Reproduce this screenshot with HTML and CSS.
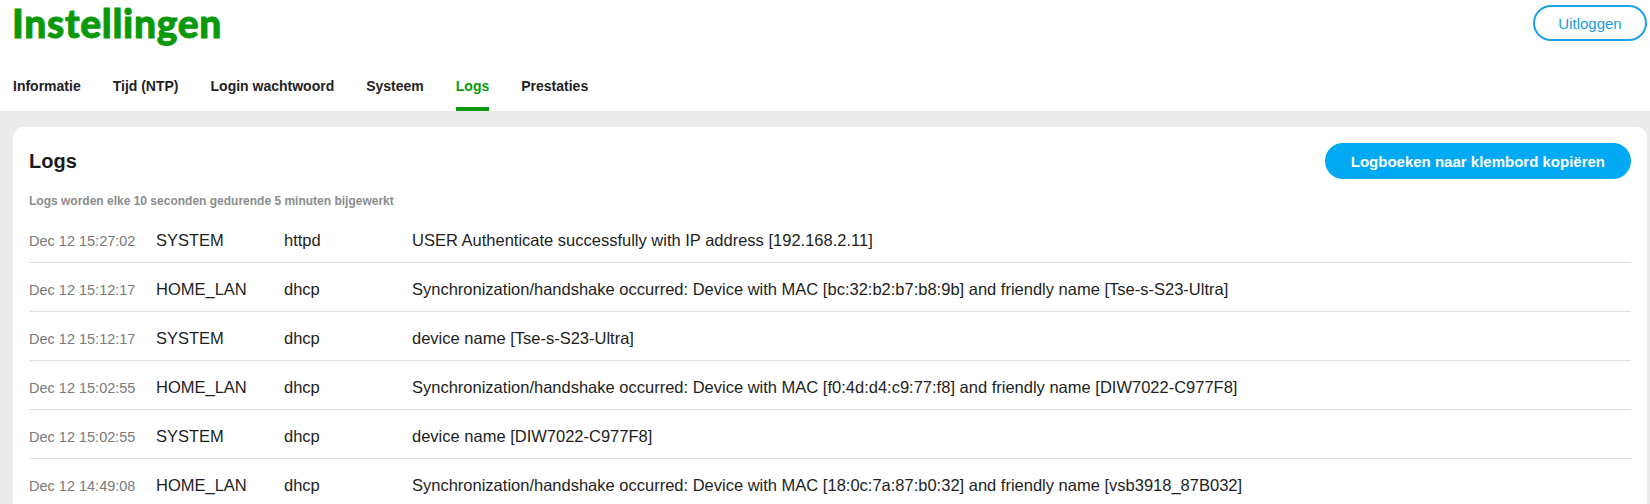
FILE: index.html
```html
<!DOCTYPE html>
<html lang="nl">
<head>
<meta charset="utf-8">
<title>Instellingen</title>
<link rel="stylesheet" href="styles.css">
</head>
<body>
<header class="header">
  <h1 class="title">Instellingen</h1>
  <button class="logout">Uitloggen</button>
</header>
<nav class="tabs">
  <a class="tab">Informatie</a>
  <a class="tab">Tijd (NTP)</a>
  <a class="tab">Login wachtwoord</a>
  <a class="tab">Systeem</a>
  <a class="tab active">Logs</a>
  <a class="tab">Prestaties</a>
</nav>
<main class="main">
  <section class="card">
    <div class="card-head">
      <h2 class="card-title">Logs</h2>
      <button class="copy">Logboeken naar klembord kopiëren</button>
    </div>
    <p class="note">Logs worden elke 10 seconden gedurende 5 minuten bijgewerkt</p>
    <div class="log">
      <div class="row"><span class="date">Dec 12 15:27:02</span><span>SYSTEM</span><span>httpd</span><span>USER Authenticate successfully with IP address [192.168.2.11]</span></div>
      <div class="row"><span class="date">Dec 12 15:12:17</span><span>HOME_LAN</span><span>dhcp</span><span>Synchronization/handshake occurred: Device with MAC [bc:32:b2:b7:b8:9b] and friendly name [Tse-s-S23-Ultra]</span></div>
      <div class="row"><span class="date">Dec 12 15:12:17</span><span>SYSTEM</span><span>dhcp</span><span>device name [Tse-s-S23-Ultra]</span></div>
      <div class="row"><span class="date">Dec 12 15:02:55</span><span>HOME_LAN</span><span>dhcp</span><span>Synchronization/handshake occurred: Device with MAC [f0:4d:d4:c9:77:f8] and friendly name [DIW7022-C977F8]</span></div>
      <div class="row"><span class="date">Dec 12 15:02:55</span><span>SYSTEM</span><span>dhcp</span><span>device name [DIW7022-C977F8]</span></div>
      <div class="row"><span class="date">Dec 12 14:49:08</span><span>HOME_LAN</span><span>dhcp</span><span>Synchronization/handshake occurred: Device with MAC [18:0c:7a:87:b0:32] and friendly name [vsb3918_87B032]</span></div>
    </div>
  </section>
</main>
</body>
</html>
```
FILE: styles.css
```css
html { overflow: hidden; }
body {
  margin: 0;
  background: #fff;
  font-family: "Liberation Sans", Arial, sans-serif;
  color: #1e1e1e;
}
.header {
  display: flex;
  justify-content: space-between;
  align-items: flex-start;
  padding: 0 3px 0 12px;
}
.title {
  margin: 0;
  font-family: "Lato", "Roboto", sans-serif;
  font-weight: 900;
  font-size: 39px;
  line-height: 47px;
  letter-spacing: 0.7px;
  -webkit-text-stroke: 0.9px #0a990a;
  color: #0a990a;
}
.logout {
  margin-top: 5px;
  height: 36px;
  width: 114px;
  border: 2px solid #1ea1e8;
  border-radius: 18px;
  background: #fff;
  color: #1a9be0;
  font-family: "Liberation Sans", Arial, sans-serif;
  font-size: 15px;
  padding: 0;
}
.tabs {
  display: flex;
  gap: 32px;
  padding: 30px 0 0 13px;
}
.tab {
  font-size: 14px;
  font-weight: bold;
  line-height: 18px;
  color: #222;
  padding-bottom: 12px;
  border-bottom: 4px solid transparent;
}
.tab.active {
  color: #0a990a;
  border-bottom-color: #0a990a;
}
.main {
  background: #ebebeb;
  padding: 16px 3px 0 13px;
}
.card {
  background: #fff;
  border-radius: 10px 10px 0 0;
  padding: 16px 16px 0;
}
.card-head {
  display: flex;
  justify-content: space-between;
  align-items: center;
}
.card-title {
  margin: 0;
  font-size: 20px;
  font-weight: bold;
  color: #1a1a1a;
}
.copy {
  height: 36px;
  padding: 0 26px;
  border: 0;
  border-radius: 18px;
  background: #00a9f4;
  color: #fff;
  font-family: "Liberation Sans", Arial, sans-serif;
  font-weight: bold;
  font-size: 15px;
}
.note {
  margin: 14px 0 5px;
  font-size: 12px;
  font-weight: bold;
  line-height: 16px;
  color: #8c8c8c;
}
.row {
  display: grid;
  grid-template-columns: 127px 128px 128px 1fr;
  align-items: baseline;
  padding: 16px 0 11px;
  line-height: 20px;
  font-size: 16.5px;
  color: #1e1e1e;
  border-bottom: 1px solid #dedede;
}
.date {
  font-size: 14.5px;
  color: #7a7a7a;
}
```
